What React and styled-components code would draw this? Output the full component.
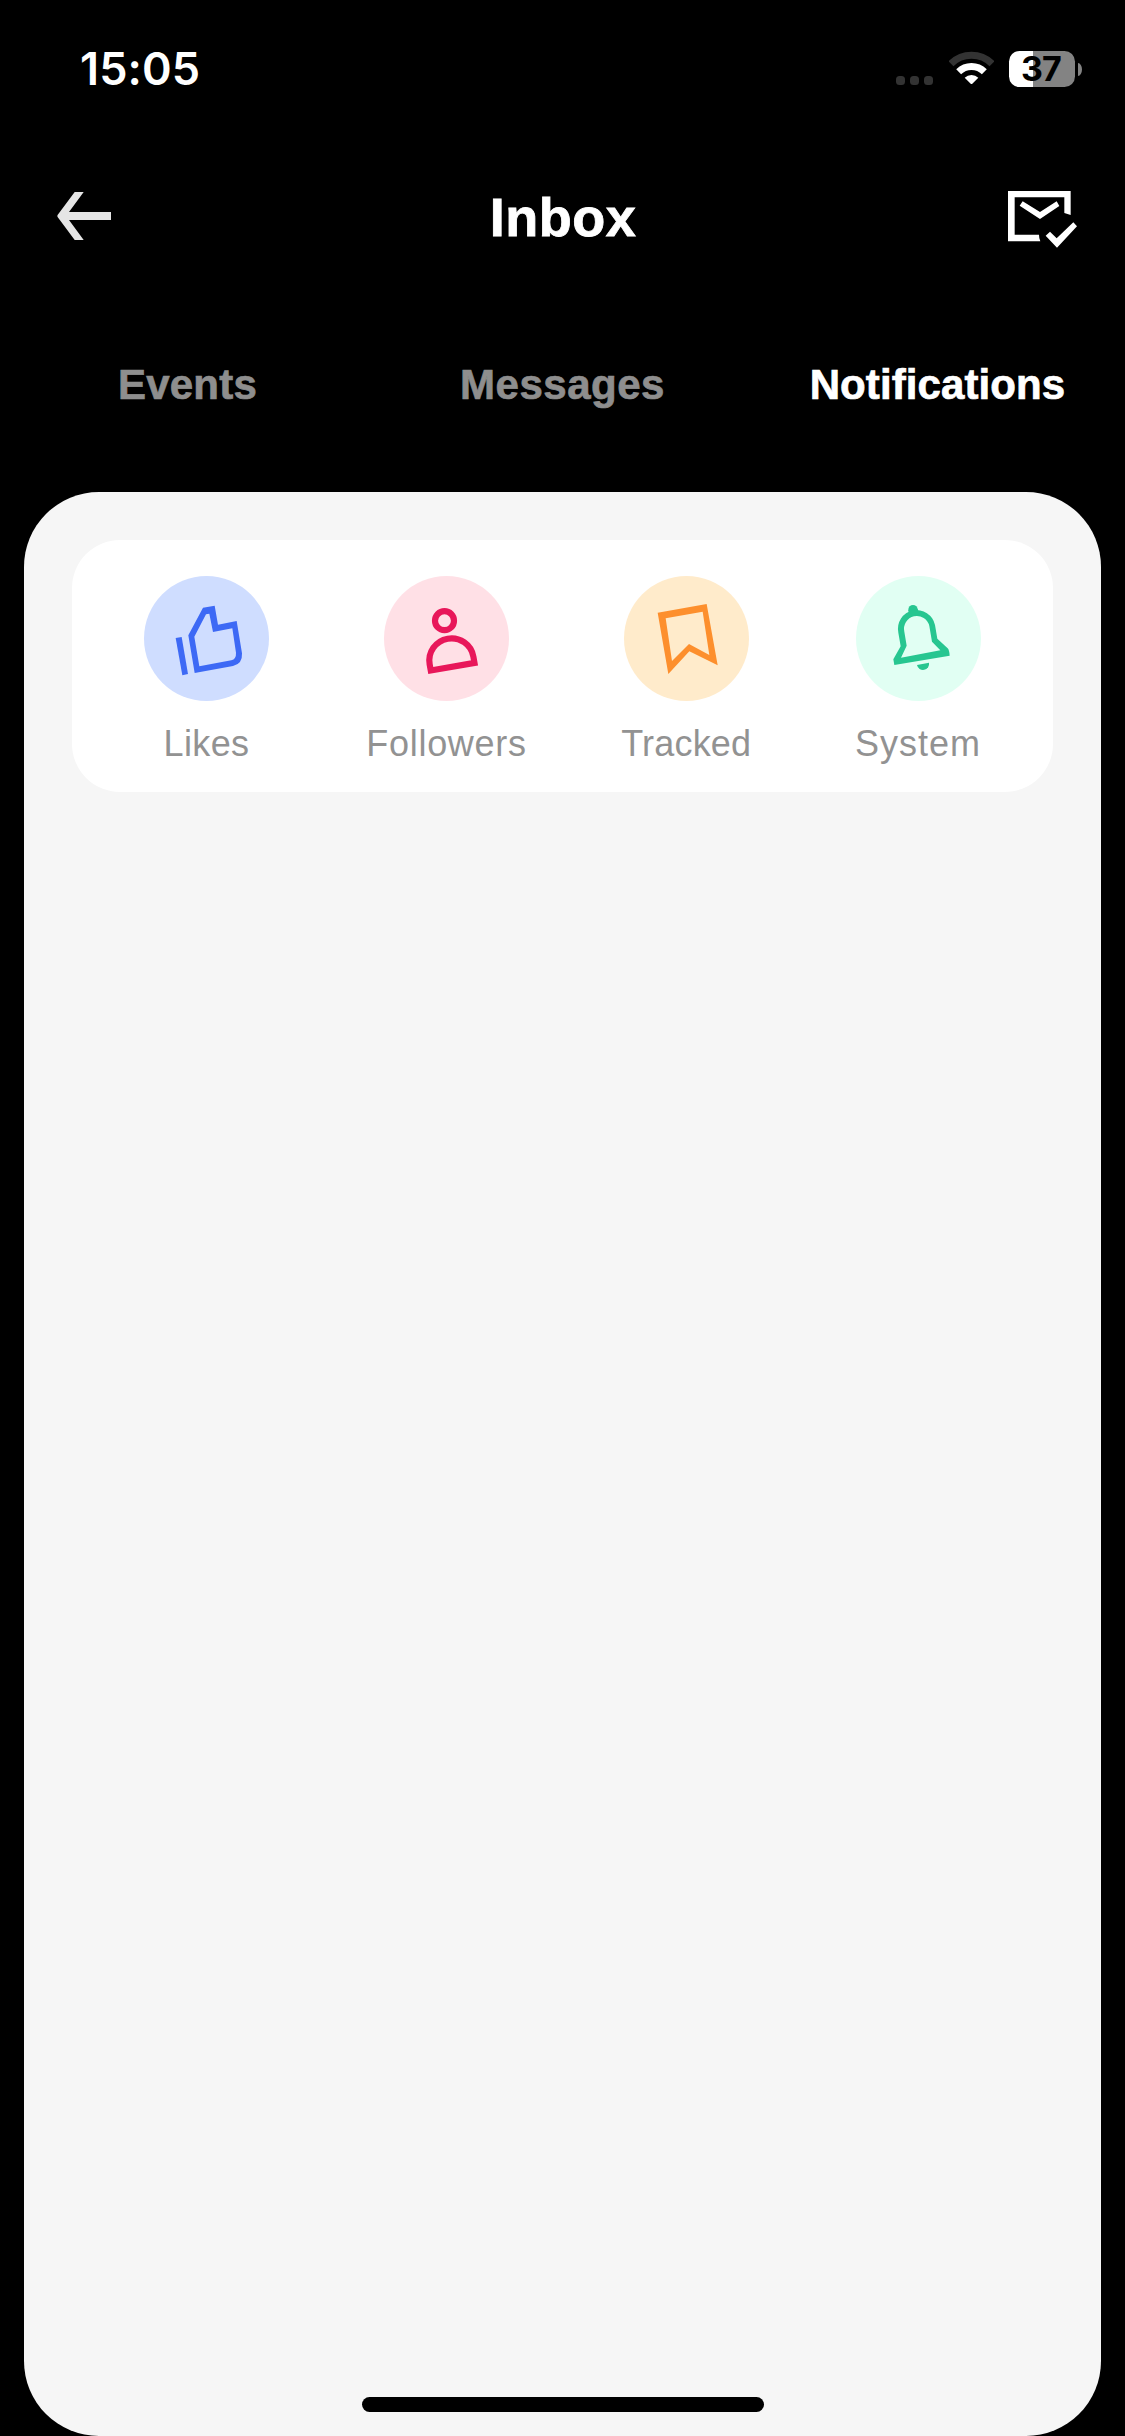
import React from 'react';
import styled, { createGlobalStyle } from 'styled-components';

const GlobalStyle = createGlobalStyle`
  *, *::before, *::after {
    box-sizing: border-box;
  }
  body {
    margin: 0;
    background-color: #000;
    font-family: 'Liberation Sans', Arial, sans-serif;
  }
`;

const StyledScreen = styled.div`
  width: 1125px;
  height: 2436px;
  display: flex;
  flex-direction: column;
  background-color: #000;
  overflow: hidden;
`;

const StyledStatusBar = styled.div`
  height: 138px;
  padding: 0 43px 0 80px;
  display: flex;
  align-items: center;
  justify-content: space-between;
`;

const StyledTime = styled.span`
  color: #fff;
  font-family: Inter, sans-serif;
  font-size: 45px;
  font-weight: 600;
  line-height: 54px;
  letter-spacing: 0.1px;
`;

const StyledIndicators = styled.div`
  height: 36px;
  display: flex;
  align-items: flex-end;
`;

const StyledSignal = styled.div`
  display: flex;
  gap: 5px;
  margin: 0 16px 2px 0;
`;

const StyledSignalDot = styled.span`
  width: 9px;
  height: 9px;
  border-radius: 3.5px;
  background-color: #333;
`;

const StyledWifi = styled.svg`
  width: 45px;
  height: 34px;
  margin: 0 15px 2px 0;
`;

const StyledBattery = styled.div`
  width: 66px;
  height: 36px;
  padding-right: 2px;
  border-radius: 10.5px;
  display: flex;
  align-items: center;
  justify-content: center;
  background: linear-gradient(to right, #fff 24px, #838383 24px);
  color: #000;
  font-family: Inter, sans-serif;
  font-size: 34px;
  font-weight: 700;
  line-height: 36px;
  letter-spacing: -0.9px;
`;

const StyledBatteryCap = styled.span`
  width: 4px;
  height: 13px;
  margin: 0 0 11px 3px;
  border-radius: 0 4px 4px 0 / 0 6.5px 6.5px 0;
  background-color: #838383;
`;

const StyledHeader = styled.header`
  height: 156px;
  padding: 0 48px 0 57px;
  display: grid;
  grid-template-columns: 1fr auto 1fr;
  align-items: center;
`;

const StyledTitle = styled.h1`
  margin: 0;
  padding: 2px 8px 0 0;
  color: #fff;
  font-size: 54px;
  font-weight: 700;
  line-height: 62px;
  letter-spacing: 0.5px;
  -webkit-text-stroke: 0.8px currentColor;
`;

const StyledBackIcon = styled.svg`
  width: 54px;
  height: 48px;
`;

const StyledReadIcon = styled.svg`
  width: 69.33px;
  height: 57px;
  margin-top: 7px;
  justify-self: end;
`;

const StyledTabs = styled.nav`
  height: 198px;
  padding-top: 67px;
  display: grid;
  grid-template-columns: repeat(3, 1fr);
`;

const StyledTab = styled.a`
  color: ${({ $active }) => ($active ? '#fff' : '#8e8e8e')};
  font-size: 42px;
  font-weight: 700;
  line-height: 48px;
  letter-spacing: ${({ $spacing }) => $spacing}px;
  text-align: center;
  -webkit-text-stroke: 0.7px currentColor;
`;

const StyledPanel = styled.main`
  flex: 1;
  margin: 0 24px;
  padding: 48px 48px 24px;
  display: flex;
  flex-direction: column;
  align-items: center;
  justify-content: space-between;
  border-radius: 75px;
  background-color: #f6f6f6;
`;

const StyledCard = styled.section`
  width: 100%;
  height: 252px;
  padding: 36px 0 0 14.5px;
  display: grid;
  grid-template-columns: 240px 240px 239.5px 224px;
  border-radius: 48px;
  background-color: #fff;
`;

const StyledCategory = styled.div`
  display: flex;
  flex-direction: column;
  align-items: center;
`;

const StyledBadge = styled.div`
  width: 125px;
  height: 125px;
  border-radius: 50%;
  background-color: ${({ $background }) => $background};
  color: ${({ $color }) => $color};
  svg {
    display: block;
    width: 100%;
    height: 100%;
  }
`;

const StyledLabel = styled.span`
  margin-top: 22px;
  color: #929292;
  font-size: 36px;
  line-height: 42px;
  letter-spacing: ${({ $spacing }) => $spacing}px;
`;

const StyledHomeIndicator = styled.div`
  width: 402px;
  height: 15px;
  border-radius: 8px;
  background-color: #000;
`;

const LikeIcon = () => (
  <svg viewBox="0 0 375 375" fill="currentColor" fillRule="evenodd">
    <path d="M95 186 113 183 132 294 115 298Z" />
    <path d="M133 178 177 95 212 89 222 146 278 135 294 232Q296 264 267 270L152 291ZM151 182 166 271 262 253Q277 249 276 230L265 157 207 168 196 113 186 115Z" />
  </svg>
);

const FollowerIcon = () => (
  <svg viewBox="0 0 375 375" fill="none" stroke="currentColor" strokeWidth="18.5">
    <circle cx="181.5" cy="134" r="28.5" />
    <path d="M140.3 283.5 137 265.2A66.6 66.6 0 0 1 268.2 242L271.5 260.7Z" />
  </svg>
);

const TrackedIcon = () => (
  <svg viewBox="0 0 375 375" fill="currentColor" fillRule="evenodd">
    <path d="M101 110 248 84 281 268 196 226 133 294ZM125 127 144 255 195 204 256 237 236 107Z" />
  </svg>
);

const BellIcon = () => (
  <svg viewBox="0 0 375 375" fill="currentColor" fillRule="evenodd">
    <circle cx="171" cy="101" r="14" />
    <path d="M157 102 185 98 188 112 160 117Z" />
    <path d="M127 170A56 56 0 0 1 237 147L244 188 275 217Q280 222 281 239L115 267 112 250 134 211ZM145 167 152 209 135 245 253 223 228 197 220 150A38 38 0 0 0 145 167Z" />
    <path d="M183 267 219 260A18 18 0 0 1 183 267Z" />
  </svg>
);

const tabs = [
  { name: 'Events', spacing: 0.2 },
  { name: 'Messages', spacing: 0.5 },
  { name: 'Notifications', spacing: 0.1, active: true },
];

const categories = [
  { name: 'Likes', spacing: 0.4, color: '#3d69f5', background: '#cfddff', Icon: LikeIcon },
  { name: 'Followers', spacing: 0.7, color: '#e8175a', background: '#ffe0e6', Icon: FollowerIcon },
  { name: 'Tracked', spacing: 0.2, color: '#fd8f2d', background: '#ffebcb', Icon: TrackedIcon },
  { name: 'System', spacing: 1, color: '#27c690', background: '#e1fff3', Icon: BellIcon },
];

const StatusBar = () => (
  <StyledStatusBar>
    <StyledTime>15:05</StyledTime>
    <StyledIndicators>
      <StyledSignal>
        <StyledSignalDot />
        <StyledSignalDot />
        <StyledSignalDot />
      </StyledSignal>
      <StyledWifi viewBox="0 0 135 102" fill="none">
        <path d="M6 38A87 87 0 0 1 129 38" stroke="#333" strokeWidth="21" />
        <path d="M29 62A55 55 0 0 1 106 62" stroke="#fff" strokeWidth="21" />
        <path d="M47 80A30 30 0 0 1 88 80L70 98Q67.5 100 65 98Z" fill="#fff" />
      </StyledWifi>
      <StyledBattery>37</StyledBattery>
      <StyledBatteryCap />
    </StyledIndicators>
  </StyledStatusBar>
);

const Header = () => (
  <StyledHeader>
    <StyledBackIcon viewBox="0 0 54 48" fill="#e5e5e5">
      <path d="M54 20H12L26.7 0H17.7L.6 23Q0 24 .6 25L17.7 48H26.7L12 28H54Z" />
    </StyledBackIcon>
    <StyledTitle>Inbox</StyledTitle>
    <StyledReadIcon viewBox="0 0 208 171" fill="#fff">
      <path d="M0 0H188V72L169 66V19H20V131H93Q93 142 97 151H0Z" />
      <path d="M44 31 96 63 146 31 154 45 96 84 35 44Z" />
      <path d="M113 134 126 122 146 142 196 94 207 106 147 170Z" />
    </StyledReadIcon>
  </StyledHeader>
);

const App = () => {
  return (
    <>
      <GlobalStyle />
      <StyledScreen>
        <StatusBar />
        <Header />
        <StyledTabs>
          {tabs.map(({ name, spacing, active }) => (
            <StyledTab key={name} $spacing={spacing} $active={active}>
              {name}
            </StyledTab>
          ))}
        </StyledTabs>
        <StyledPanel>
          <StyledCard>
            {categories.map(({ name, spacing, color, background, Icon }) => (
              <StyledCategory key={name}>
                <StyledBadge $color={color} $background={background}>
                  <Icon />
                </StyledBadge>
                <StyledLabel $spacing={spacing}>{name}</StyledLabel>
              </StyledCategory>
            ))}
          </StyledCard>
          <StyledHomeIndicator />
        </StyledPanel>
      </StyledScreen>
    </>
  );
};

export default App;
